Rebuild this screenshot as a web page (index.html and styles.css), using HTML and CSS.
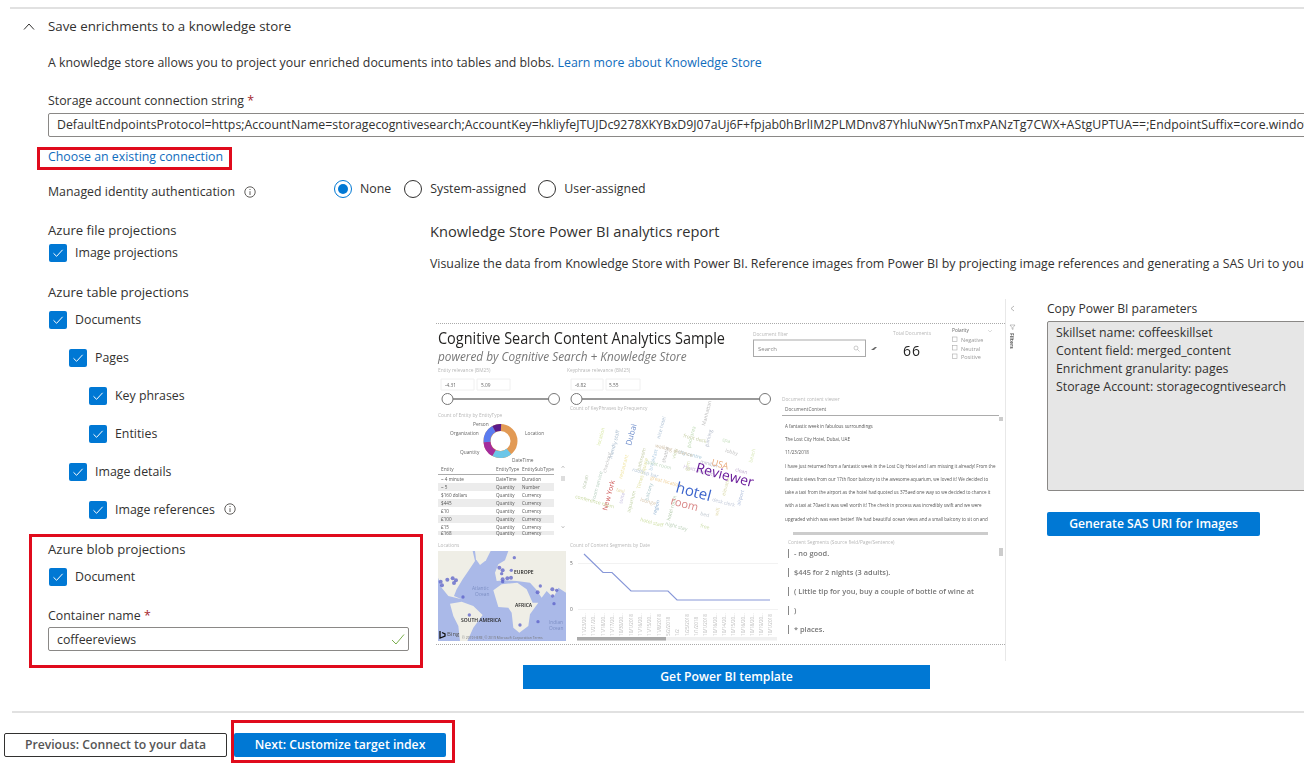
FILE: index.html
```html
<!DOCTYPE html>
<html lang="en">
<head>
<meta charset="utf-8">
<title>Save enrichments to a knowledge store</title>
<link rel="stylesheet" href="styles.css">
</head>
<body>
<div class="page">
  <div class="rule rule-top"></div>
  <div class="section-head">
    <svg class="chev" width="12" height="9" viewBox="0 0 12 9"><path d="M1 7.500 L6 2 L11 7.500" fill="none" stroke="#323130" stroke-width="1"/></svg>
    <span>Save enrichments to a knowledge store</span>
  </div>
  <div class="indent">
    <p class="desc">A knowledge store allows you to project your enriched documents into tables and blobs. <a class="link">Learn more about Knowledge Store</a></p>
    <div class="label conn-label">Storage account connection string <span class="req">*</span></div>
    <div class="input conn-input">DefaultEndpointsProtocol=https;AccountName=storagecogntivesearch;AccountKey=hkliyfeJTUJDc9278XKYBxD9J07aUj6F+fpjab0hBrlIM2PLMDnv87YhluNwY5nTmxPANzTg7CWX+AStgUPTUA==;EndpointSuffix=core.windows.net</div>
    <div class="link-row"><a class="link annotated">Choose an existing connection<span class="red-box box-link"></span></a></div>
    <div class="identity">
      <div class="identity-label">Managed identity authentication
        <svg class="info" width="12" height="12" viewBox="0 0 12 12"><circle cx="6" cy="6" r="5.2" fill="none" stroke="#605e5c"/><path d="M6 5.2V9M6 3v1" stroke="#605e5c"/></svg>
      </div>
      <div class="radios">
        <span class="radio on"></span><span class="radio-text r1">None</span>
        <span class="radio"></span><span class="radio-text r2">System-assigned</span>
        <span class="radio"></span><span class="radio-text">User-assigned</span>
      </div>
    </div>
    <div class="columns">
      <div class="left">
        <div class="heading">Azure file projections</div>
        <label class="check first"><span class="box"><svg width="18" height="18" viewBox="0 0 18 18"><path d="M4.5 9.3 L7.6 12.3 L13.6 5.8" fill="none" stroke="#fff"/></svg></span>Image projections</label>
        <div class="heading gap-heading">Azure table projections</div>
        <label class="check tight"><span class="box"><svg width="18" height="18" viewBox="0 0 18 18"><path d="M4.5 9.3 L7.6 12.3 L13.6 5.8" fill="none" stroke="#fff"/></svg></span>Documents</label>
        <label class="check lvl1"><span class="box"><svg width="18" height="18" viewBox="0 0 18 18"><path d="M4.5 9.3 L7.6 12.3 L13.6 5.8" fill="none" stroke="#fff"/></svg></span>Pages</label>
        <label class="check lvl2"><span class="box"><svg width="18" height="18" viewBox="0 0 18 18"><path d="M4.5 9.3 L7.6 12.3 L13.6 5.8" fill="none" stroke="#fff"/></svg></span>Key phrases</label>
        <label class="check lvl2"><span class="box"><svg width="18" height="18" viewBox="0 0 18 18"><path d="M4.5 9.3 L7.6 12.3 L13.6 5.8" fill="none" stroke="#fff"/></svg></span>Entities</label>
        <label class="check lvl1"><span class="box"><svg width="18" height="18" viewBox="0 0 18 18"><path d="M4.5 9.3 L7.6 12.3 L13.6 5.8" fill="none" stroke="#fff"/></svg></span>Image details</label>
        <label class="check lvl2"><span class="box"><svg width="18" height="18" viewBox="0 0 18 18"><path d="M4.5 9.3 L7.6 12.3 L13.6 5.8" fill="none" stroke="#fff"/></svg></span>Image references
          <svg class="info info-ref" width="12" height="12" viewBox="0 0 12 12"><circle cx="6" cy="6" r="5.2" fill="none" stroke="#605e5c"/><path d="M6 5.2V9M6 3v1" stroke="#605e5c"/></svg></label>
        <div class="blob">
          <span class="red-box box-blob"></span>
          <div class="heading">Azure blob projections</div>
          <label class="check blob-check"><span class="box"><svg width="18" height="18" viewBox="0 0 18 18"><path d="M4.5 9.3 L7.6 12.3 L13.6 5.8" fill="none" stroke="#fff"/></svg></span>Document</label>
          <div class="label container-label">Container name <span class="req">*</span></div>
          <div class="input container-input">coffeereviews
            <svg width="14" height="13" viewBox="0 0 14 13"><path d="M1 7 L5 11 L13 1.5" fill="none" stroke="#6ba539" stroke-width=".9"/></svg>
          </div>
        </div>
      </div>
      <div class="right">
        <div class="report-title">Knowledge Store Power BI analytics report</div>
        <div class="report-desc">Visualize the data from Knowledge Store with Power BI. Reference images from Power BI by projecting image references and generating a SAS Uri to your Power BI report.</div>
        <div class="report-row">
          <svg class="report" width="590" height="362" viewBox="430 298 590 362">
            <rect x="430" y="298" width="590" height="362" fill="#fff"/>
            <path d="M1005.5 298V660" stroke="#e8e8e8"/>
            <path d="M436 322.5H1006M436 643.5H1006" stroke="#aaa" stroke-dasharray="1 1"/>
            <path d="M1014 305l-3 2.500 3 2.500" fill="none" stroke="#999" stroke-width=".7"/>
            <path d="M1010 324h5l-2 2.500v2l-1-.7v-1.300z" fill="none" stroke="#888" stroke-width=".5"/>
            <text class="t-filters" transform="translate(1010 332) rotate(90)">Filters</text>

            <text class="t-title" x="438" y="342.500" textLength="287" lengthAdjust="spacingAndGlyphs">Cognitive Search Content Analytics Sample</text>
            <text class="t-sub" x="438" y="359.500">powered by Cognitive Search + Knowledge Store</text>

            <text class="t-cap" x="438" y="371">Entity relevance (BM25)</text>
            <text class="t-cap" x="567" y="371">Keyphrase relevance (BM25)</text>
            <path d="M441 378h33v11h-33zM477 378h33v11h-33zM571 378h32v11h-32zM606 378h34v11h-34z" fill="none" stroke="#f0f0f0"/>
            <text class="t-small" x="445" y="385.500">-4.31</text>
            <text class="t-small" x="481" y="385.500">5.09</text>
            <text class="t-small" x="575" y="385.500">-6.82</text>
            <text class="t-small" x="609" y="385.500">5.55</text>
            <path d="M447 398H554M576 398H765" stroke="#777" stroke-width="1.300"/>
            <g fill="#fff" stroke="#777">
              <circle cx="447.500" cy="398" r="5.500"/><circle cx="554" cy="398" r="5.500"/>
              <circle cx="576.500" cy="398" r="5.500"/><circle cx="765" cy="398" r="5.500"/>
            </g>

            <text class="t-cap" x="438" y="416">Count of Entity by EntityType</text>
            <text class="t-cap" x="570" y="409">Count of KeyPhrases by Frequency</text>
            <g fill="none" stroke-width="7">
              <circle cx="500.500" cy="440" r="13.500" stroke="#e29a55"/>
              <path d="M509 450.500A13.500 13.500 0 0 1 494 452" stroke="#6cc6e8"/>
              <path d="M494 452A13.500 13.500 0 0 1 487 441" stroke="#a42c9c"/>
              <path d="M487 441A13.500 13.500 0 0 1 494 428" stroke="#5b7cf0"/>
              <path d="M494 428A13.500 13.500 0 0 1 501 426.500" stroke="#5b1a8a"/>
            </g>
            <text class="t-small" x="473" y="425">Person</text>
            <text class="t-small" x="450" y="434">Organization</text>
            <text class="t-small" x="525" y="434">Location</text>
            <text class="t-small" x="460" y="453">Quantity</text>
            <text class="t-small" x="512" y="461">DateTime</text>

            <text class="t-small" x="441" y="469.500">Entity</text>
            <text class="t-small" x="496" y="469.500">EntityType</text>
            <text class="t-small" x="522" y="469.500">EntitySubType</text>
            <path d="M438 473.500H554" stroke="#888" stroke-width=".7"/>
            <path d="M438 482h116v8h-116zM438 498h116v8h-116zM438 514h116v8h-116zM438 530h116v4h-116z" fill="#ececec"/>
            <g class="t-row">
              <text x="441" y="480">~ 4 minute</text><text x="496" y="480">DateTime</text><text x="522" y="480">Duration</text>
              <text x="441" y="488">~ 5</text><text x="496" y="488">Quantity</text><text x="522" y="488">Number</text>
              <text x="441" y="496">$160 dollars</text><text x="496" y="496">Quantity</text><text x="522" y="496">Currency</text>
              <text x="441" y="504">$445</text><text x="496" y="504">Quantity</text><text x="522" y="504">Currency</text>
              <text x="441" y="512">£10</text><text x="496" y="512">Quantity</text><text x="522" y="512">Currency</text>
              <text x="441" y="520">£100</text><text x="496" y="520">Quantity</text><text x="522" y="520">Currency</text>
              <text x="441" y="528">£15</text><text x="496" y="528">Quantity</text><text x="522" y="528">Currency</text>
              <text x="441" y="534">£168</text><text x="496" y="534">Quantity</text><text x="522" y="534">Currency</text>
            </g>
            <path d="M561 475h4v5h-4z" fill="#ddd"/>
            <path d="M561.500 467l1.500-2 1.500 2M561.500 525l1.500 2 1.500-2" fill="none" stroke="#aaa" stroke-width=".6"/>

            <!-- word cloud -->
            <g class="cloud">
              <text class="w-v" style="fill:#d9e8a8" transform="translate(600 445) rotate(-75)">location</text>
              <text class="w-v" style="fill:#9fb4c8" transform="translate(612 458) rotate(-75)">friendly staff</text>
              <text class="w-b" transform="translate(631 445) rotate(-75)">Dubai</text>
              <text class="w-v" style="fill:#c0c8a0" transform="translate(640 470) rotate(-75)">bathroom</text>
              <text class="w-v" style="fill:#f0e4a0" transform="translate(622 478) rotate(-75)">restaurant</text>
              <text class="w-v" style="fill:#a9c8e0" transform="translate(652 470) rotate(-75)">breakfast</text>
              <text class="w-v" style="fill:#b0b0b0" transform="translate(665 462) rotate(-75)">shuttle</text>
              <text class="w-v" style="fill:#c8d8b0" transform="translate(675 458) rotate(-75)">view</text>
              <text class="w-v" style="fill:#bcd8b0" transform="translate(690 447) rotate(-75)">pool area</text>
              <text class="w-v" style="fill:#b0b8c8" transform="translate(708 446) rotate(-75)">parking</text>
              <text class="w-v" style="fill:#b4b4b4" transform="translate(705 425) rotate(-75)">Manhattan</text>
              <text class="w-v" style="fill:#d8e8b8" transform="translate(752 462) rotate(-75)">beach</text>
              <text class="w-v" style="fill:#bfbfbf" transform="translate(725 451) rotate(15)">lobby</text>
              <text class="w-v" style="fill:#c8d0a8" transform="translate(683 436) rotate(15)">front desk</text>
              <text class="w-v" style="fill:#a8c8d8" transform="translate(678 452) rotate(15)">city centre</text>
              <text class="w-v" style="fill:#c8b8d8" transform="translate(683 467) rotate(15)">Hyatt Regency</text>
              <text class="w-v" style="fill:#f0d098" transform="translate(650 478) rotate(15)">great location</text>
              <text class="w-v" style="fill:#e0e0a0" transform="translate(640 488) rotate(-75)">Times Square</text>
              <text class="w-v" style="fill:#8fb0d0" transform="translate(656 514) rotate(-75)">region</text>
              <text class="w-v" style="fill:#b0c8a8" transform="translate(670 520) rotate(-75)">hotel room</text>
              <text class="w-r" transform="translate(607 510) rotate(-75)">New York</text>
              <text class="w-v" style="fill:#c8c0e0" transform="translate(622 503) rotate(-75)">suite</text>
              <text class="w-v" style="fill:#b8d0c0" transform="translate(595 500) rotate(-75)">room service</text>
              <text class="w-v" style="fill:#c8d8a0" transform="translate(575 497) rotate(15)">conference room</text>
              <text class="w-v" style="fill:#d0e0a8" transform="translate(640 520) rotate(15)">hotel staff</text>
              <text class="w-v" style="fill:#bcd0b8" transform="translate(665 524) rotate(15)">night stay</text>
              <text class="w-v" style="fill:#c0c8d0" transform="translate(700 514) rotate(15)">bed</text>
              <text class="w-v" style="fill:#d8d8a8" transform="translate(725 495) rotate(-75)">elevator</text>
              <text class="w-v" style="fill:#a8b8d8" transform="translate(740 505) rotate(-75)">airport</text>
              <text class="w-v" style="fill:#c4c4c4" transform="translate(606 472) rotate(-75)">checkout</text>
              <text class="w-v" style="fill:#e4d8a0" transform="translate(616 490) rotate(15)">taxi</text>
              <text class="w-v" style="fill:#b8c8d8" transform="translate(632 470) rotate(15)">rooftop bar</text>
              <text class="w-v" style="fill:#c0d8c0" transform="translate(646 462) rotate(15)">quiet room</text>
              <text class="w-v" style="fill:#d0c0a8" transform="translate(655 446) rotate(15)">walking distance</text>
              <text class="w-v" style="fill:#aec0d4" transform="translate(660 438) rotate(-75)">nice hotel</text>
              <text class="w-v" style="fill:#d8e0b0" transform="translate(688 470) rotate(-75)">gym</text>
              <text class="w-v" style="fill:#b8b8c8" transform="translate(700 462) rotate(15)">minibar</text>
              <text class="w-v" style="fill:#c8e0c0" transform="translate(722 440) rotate(15)">spa</text>
              <text class="w-v" style="fill:#c0b0d0" transform="translate(735 470) rotate(15)">clean</text>
              <text class="w-v" style="fill:#d8c8b0" transform="translate(640 500) rotate(15)">lounge</text>
              <text class="w-v" style="fill:#c4d4a8" transform="translate(630 512) rotate(-75)">aquarium</text>
              <text class="w-v" style="fill:#a8c4c8" transform="translate(648 500) rotate(-75)">balcony</text>
              <text class="w-v" style="fill:#e0d8a8" transform="translate(718 515) rotate(-75)">wifi</text>
              <text class="w-v" style="fill:#c0c8d8" transform="translate(712 500) rotate(15)">desk clerk</text>
              <text class="w-v" style="fill:#bccab0" transform="translate(585 488) rotate(-75)">ocean</text>
              <text class="w-v" style="fill:#d0e0b0" transform="translate(700 526) rotate(15)">free</text>
              <text class="w-usa" transform="translate(711 464) rotate(15)">USA</text>
              <text class="w-review" transform="translate(695 471) rotate(15)">Reviewer</text>
              <text class="w-hotel" transform="translate(675 491) rotate(15)">hotel</text>
              <text class="w-room" transform="translate(670 503) rotate(15)">room</text>
            </g>

            <!-- search and totals -->
            <text class="t-cap" x="753" y="335">Document filter</text>
            <rect x="753.500" y="339" width="112" height="16.500" fill="#fff" stroke="#aaa"/>
            <text class="t-search" x="758" y="350">Search</text>
            <circle cx="856" cy="347" r="2" fill="none" stroke="#aaa" stroke-width=".6"/>
            <path d="M857.500 348.500l2 2" stroke="#aaa" stroke-width=".6"/>
            <path d="M871 349l4-3h2l-3 3z" fill="#666"/>
            <text class="t-cap" x="893" y="334">Total Documents</text>
            <text class="t-total" x="912" y="354.500">66</text>
            <text class="t-small" x="952" y="331">Polarity</text>
            <path d="M988 329l2 2 2-2" fill="none" stroke="#bbb" stroke-width=".5"/>
            <g fill="#fff" stroke="#aaa" stroke-width=".6">
              <rect x="952.500" y="336" width="4.500" height="4.500"/><rect x="952.500" y="344.500" width="4.500" height="4.500"/><rect x="952.500" y="353" width="4.500" height="4.500"/>
            </g>
            <text class="t-pol" x="961" y="341">Negative</text>
            <text class="t-pol" x="961" y="349.500">Neutral</text>
            <text class="t-pol" x="961" y="358">Positive</text>

            <!-- document viewer -->
            <text class="t-cap" x="782" y="400">Document content viewer</text>
            <text class="t-small" x="785" y="410">DocumentContent</text>
            <path d="M782 414.500H999" stroke="#888" stroke-width=".7"/>
            <g class="t-row t-doc">
              <text x="785" y="427">A fantastic week in fabulous surroundings</text>
              <text x="785" y="440">The Lost City Hotel, Dubai, UAE</text>
              <text x="785" y="453">11/23/2018</text>
              <text x="785" y="467">I have just returned from a fantastic week in the Lost City Hotel and I am missing it already! From the</text>
              <text x="785" y="480">fantastic views from our 17th floor balcony to the awesome aquarium, we loved it! We decided to</text>
              <text x="785" y="493">take a taxi from the airport as the hotel had quoted us 375aed one way so we decided to chance it</text>
              <text x="785" y="506">with a taxi at 70aed it was well worth it! The check in process was incredibly swift and we were</text>
              <text x="785" y="520">upgraded which was even better! We had beautiful ocean views and a small balcony to sit on and</text>
            </g>
            <path d="M999 416h4v4h-4zM793 531h195v3h-195zM999 547h4v8h-4z" fill="#ccc"/>
            <text class="t-cap" x="788" y="543">Content Segments (Source field/Page/Sentence)</text>
            <path d="M788.500 548v9M788.500 567v9M788.500 586v9M788.500 605v9M788.500 624v9" stroke="#888"/>
            <g class="t-seg">
              <text x="794" y="555">- no good.</text>
              <text x="794" y="574">$445 for 2 nights (3 adults).</text>
              <text x="794" y="593">( Little tip for you, buy a couple of bottle of wine at</text>
              <text x="794" y="612">)</text>
              <text x="794" y="631">* places.</text>
            </g>

            <!-- map -->
            <text class="t-cap" x="438" y="546">Locations</text>
            <rect x="438" y="550" width="128" height="90" fill="#aab9e8"/>
            <g transform="translate(430 530) scale(.3333)">
              <path fill="#efeee6" d="M24 60H128L135 90 115 120 98 145 80 175 72 195 95 205 55 195 35 170 24 140z"/>
              <path fill="#efeee6" d="M135 60H182L168 88 150 102 138 85z"/>
              <path fill="#efeee6" d="M60 218L95 212 130 225 158 252 130 290 112 330H90L85 285 70 255z"/>
              <path fill="#efeee6" d="M190 178L215 160 262 155 290 175 308 215 325 215 300 250 295 285 268 305 250 290 245 245 235 230 205 228z"/>
              <path fill="#efeee6" d="M200 150L195 125 205 100 225 88 235 60H408V185L385 170 370 200 350 180 335 200 318 175 300 155 260 150 225 148z"/>
              <g fill="#5a5fc8" fill-opacity=".75">
                <circle cx="32" cy="152" r="6"/><circle cx="36" cy="163" r="6"/><circle cx="52" cy="146" r="6"/><circle cx="68" cy="142" r="6"/><circle cx="78" cy="148" r="6"/><circle cx="72" cy="156" r="6"/>
                <circle cx="99" cy="198" r="5"/><circle cx="118" cy="252" r="5"/>
                <circle cx="253" cy="80" r="5"/><circle cx="208" cy="110" r="6"/><circle cx="218" cy="118" r="6"/><circle cx="215" cy="128" r="5"/><circle cx="244" cy="118" r="5"/>
                <circle cx="218" cy="145" r="6"/><circle cx="232" cy="142" r="6"/><circle cx="243" cy="140" r="6"/><circle cx="218" cy="152" r="5"/>
                <circle cx="331" cy="165" r="5"/><circle cx="323" cy="184" r="6"/><circle cx="367" cy="175" r="6"/><circle cx="380" cy="178" r="5"/><circle cx="368" cy="195" r="5"/><circle cx="372" cy="218" r="5"/>
                <circle cx="324" cy="272" r="5"/><circle cx="270" cy="282" r="5"/>
              </g>
            </g>
            <text class="t-map" x="514" y="573">EUROPE</text>
            <text class="t-map" x="515" y="606">AFRICA</text>
            <text class="t-map" x="461" y="621">SOUTH AMERICA</text>
            <text class="t-ocean" x="472" y="589">Atlantic</text>
            <text class="t-ocean" x="475" y="595">Ocean</text>
            <text class="t-ocean" x="549" y="623">Indian</text>
            <text class="t-ocean" x="549" y="629">Ocean</text>
            <path d="M440 630v7l5-2v-2l-3-1.500" fill="none" stroke="#111" stroke-width="1.300"/>
            <text class="t-bing" x="447" y="635">Bing</text>
            <text class="t-tiny" x="462" y="638">© 2019 HERE, © 2019 Microsoft Corporation Terms</text>

            <!-- line chart -->
            <text class="t-cap" x="570" y="546">Count of Content Segments by Date</text>
            <path d="M578 562.500H778M578 608.500H778" stroke="#f2f2f2"/>
            <text class="t-small" x="570" y="564">5</text>
            <text class="t-small" x="570" y="610">0</text>
            <path d="M584 553L603 571.500H612L631 590H668L677 599H770" fill="none" stroke="#8797d8" stroke-width="1.200"/>
            <g class="t-row t-axis">
              <text transform="translate(586 635) rotate(-90)">11/23/20...</text>
              <text transform="translate(595 635) rotate(-90)">11/21/20...</text>
              <text transform="translate(605 635) rotate(-90)">11/18/20...</text>
              <text transform="translate(614 635) rotate(-90)">11/17/20...</text>
              <text transform="translate(623 635) rotate(-90)">10/30/20...</text>
              <text transform="translate(633 635) rotate(-90)">10/1/2018</text>
              <text transform="translate(642 635) rotate(-90)">11/16/20...</text>
              <text transform="translate(651 635) rotate(-90)">11/15/20...</text>
              <text transform="translate(661 635) rotate(-90)">11/8/2018</text>
              <text transform="translate(670 635) rotate(-90)">5/2/2018</text>
              <text transform="translate(679 635) rotate(-90)">1/2</text>
              <text transform="translate(689 635) rotate(-90)">1/25/2018</text>
              <text transform="translate(698 635) rotate(-90)">1/1/2018</text>
              <text transform="translate(707 635) rotate(-90)">10/1/2018</text>
              <text transform="translate(717 635) rotate(-90)">10/16/20...</text>
              <text transform="translate(726 635) rotate(-90)">10/14/20...</text>
              <text transform="translate(735 635) rotate(-90)">10/15/20...</text>
              <text transform="translate(745 635) rotate(-90)">10/16/20...</text>
              <text transform="translate(754 635) rotate(-90)">10/18/20...</text>
              <text transform="translate(763 635) rotate(-90)">10/19/20...</text>
              <text transform="translate(772 635) rotate(-90)">10/1/2018</text>
            </g>
            <rect x="577" y="636" width="200" height="3.500" fill="#f0f0f0"/>
            <rect x="577" y="636" width="89" height="3.500" fill="#aaa"/>
          </svg>
          <div class="params">
            <div class="params-label">Copy Power BI parameters</div>
            <div class="params-box">Skillset name: coffeeskillset<br>Content field: merged_content<br>Enrichment granularity: pages<br>Storage Account: storagecogntivesearch</div>
            <button class="btn primary sas">Generate SAS URI for Images</button>
          </div>
        </div>
        <button class="btn primary template">Get Power BI template</button>
      </div>
    </div>
  </div>
  <div class="rule rule-bottom"></div>
  <div class="footer">
    <button class="btn secondary prev">Previous: Connect to your data</button>
    <button class="btn primary next">Next: Customize target index<span class="red-box box-next"></span></button>
  </div>
</div>
</body>
</html>
```

FILE: styles.css
```css
* { box-sizing: border-box; }
html, body { margin: 0; padding: 0; height: 100%; overflow: hidden; background: #fff; }
.page {
  width: 1304px;
  height: 769px;
  overflow: hidden;
  font-family: "Open Sans", "Noto Sans", sans-serif;
  font-size: 12.35px;
  line-height: 20px;
  color: #323130;
  padding-top: 7px;
}
.rule { height: 2px; background: #e1e1e1; margin-left: 10px; }
.section-head { display: flex; align-items: center; margin-top: 7px; height: 20px; padding-left: 23px; font-size: 13.3px; }
.chev { margin-right: 13px; }
.indent { padding-left: 48px; }
.desc { margin: 17px 0 0; height: 20px; white-space: nowrap; }
.link { color: #0f6cbd; }
.label { height: 20px; white-space: nowrap; }
.req { color: #a4262c; }
.conn-label { margin-top: 18px; }
.input {
  height: 24px;
  border: 1px solid #8a8886;
  border-radius: 2px;
  padding: 0 8px;
  line-height: 21px;
  white-space: nowrap;
  background: #fff;
}
.conn-input { margin-top: 2px; width: 1400px; overflow: hidden; font-size: 12.3px; }
.link-row { margin-top: 10px; height: 20px; }
.annotated { position: relative; display: inline-block; }
.red-box { position: absolute; border: 3px solid #e00b1c; pointer-events: none; }
.box-link { left: -11px; right: -9px; top: 0; bottom: -3px; }
.identity { display: flex; margin-top: 11px; height: 43px; }
.identity-label { display: flex; align-items: center; width: 286px; height: 26px; padding-top: 1px; white-space: nowrap; }
.info { margin-left: 9px; flex: none; }
.radios { display: flex; align-items: center; height: 20px; margin-top: 1px; }
.radio { width: 18px; height: 18px; border: 1px solid #323130; border-radius: 50%; flex: none; display: flex; align-items: center; justify-content: center; }
.radio.on { border-color: #0078d4; }
.radio.on::after { content: ""; width: 10px; height: 10px; border-radius: 50%; background: #0078d4; }
.radio-text { margin-left: 8px; }
.r1 { margin-right: 13px; }
.r2 { margin-right: 12px; }
.columns { display: flex; height: 468px; }
.left { width: 382px; flex: none; margin-top: -1px; }
.right { flex: 1; min-width: 0; }
.heading { height: 20px; white-space: nowrap; font-size: 13.1px; }
.check { display: flex; align-items: center; height: 18px; white-space: nowrap; }
.box { width: 18px; height: 18px; border-radius: 2px; background: #0078d4; margin-right: 8px; margin-left: 1px; flex: none; }
.box svg { display: block; }
.first { margin-top: 4px; }
.gap-heading { margin-top: 20px; }
.tight { margin-top: 9px; }
.lvl1 { margin-top: 20px; padding-left: 20px; }
.lvl2 { margin-top: 20px; padding-left: 40px; }
.info-ref { margin-top: -2px; }
.blob { position: relative; margin-top: 20px; width: 361px; }
.box-blob { left: -19px; right: -14px; top: -5px; bottom: -17px; }
.blob-check { margin-top: 9px; }
.container-label { margin-top: 20px; }
.container-input { margin-top: 1px; display: flex; align-items: center; justify-content: space-between; padding-right: 3px; }
.report-title { font-size: 14.65px; height: 22px; white-space: nowrap; }
.report-desc { margin-top: 11px; height: 20px; white-space: nowrap; }
.report-row { display: flex; margin-top: 25px; height: 362px; }
.report { display: block; flex: none; filter: blur(.3px); }
.params { margin-left: 27px; flex: none; width: 300px; }
.params-label { height: 20px; white-space: nowrap; font-size: 12.1px; }
.params-box {
  margin-top: 2px;
  height: 170px;
  background: #e6e6e6;
  border: 1px solid #8a8886;
  border-radius: 2px;
  padding: 2px 8px;
  line-height: 18px;
  white-space: nowrap;
}
.btn {
  display: block;
  height: 24px;
  border-radius: 2px;
  font-family: inherit;
  font-size: 12.2px;
  font-weight: 600;
  line-height: 20px;
  padding: 0;
  text-align: center;
}
.primary { background: #0078d4; border: 0; color: #fff; }
.sas { margin-top: 21px; width: 213px; }
.template { margin: 4px 0 0 93px; width: 407px; border-radius: 0; }
.rule-bottom { margin-top: 22px; margin-left: 12px; }
.footer { display: flex; gap: 7px; margin-top: 20px; padding-left: 4px; }
.secondary { background: #fff; border: 1px solid #323130; color: #555; width: 223px; }
.next { position: relative; width: 212px; }
.box-next { left: -3px; right: -9px; top: -13px; bottom: -6px; }

/* report picture */
.report text { font-family: "Open Sans", sans-serif; }
.t-title { font-size: 15.500px; fill: #252423; }
.t-sub { font-size: 11.800px; font-style: italic; fill: #777; }
.t-cap { font-size: 4.800px; fill: #b8b8b8; }
.t-small { font-size: 4.800px; fill: #666; }
.t-row text { font-size: 4.600px; fill: #555; }
.t-doc text { font-size: 4.500px; }
.t-axis text { fill: #bbb; }
.t-filters { font-size: 5px; font-weight: 700; fill: #555; }
.t-search { font-size: 6px; fill: #888; }
.t-total { font-size: 14px; fill: #222; text-anchor: middle; letter-spacing: 1px; }
.t-pol { font-size: 5.500px; fill: #999; }
.t-seg text { font-size: 7.400px; font-weight: 600; fill: #777; }
.t-map { font-size: 5px; font-weight: 600; fill: #222; }
.t-ocean { font-size: 4.800px; fill: #7d8fc4; }
.t-bing { font-size: 6px; fill: #555; }
.t-tiny { font-size: 3.400px; fill: #777; }
.w-v { font-size: 5px; }
.w-b { font-size: 8px; fill: #6d8ccb; }
.w-r { font-size: 7px; fill: #d06060; }
.w-usa { font-size: 9px; fill: #e8a878; }
.w-review { font-size: 14px; fill: #6a1b9a; }
.w-hotel { font-size: 15px; fill: #3a63cc; }
.w-room { font-size: 11px; fill: #d98888; }
```
